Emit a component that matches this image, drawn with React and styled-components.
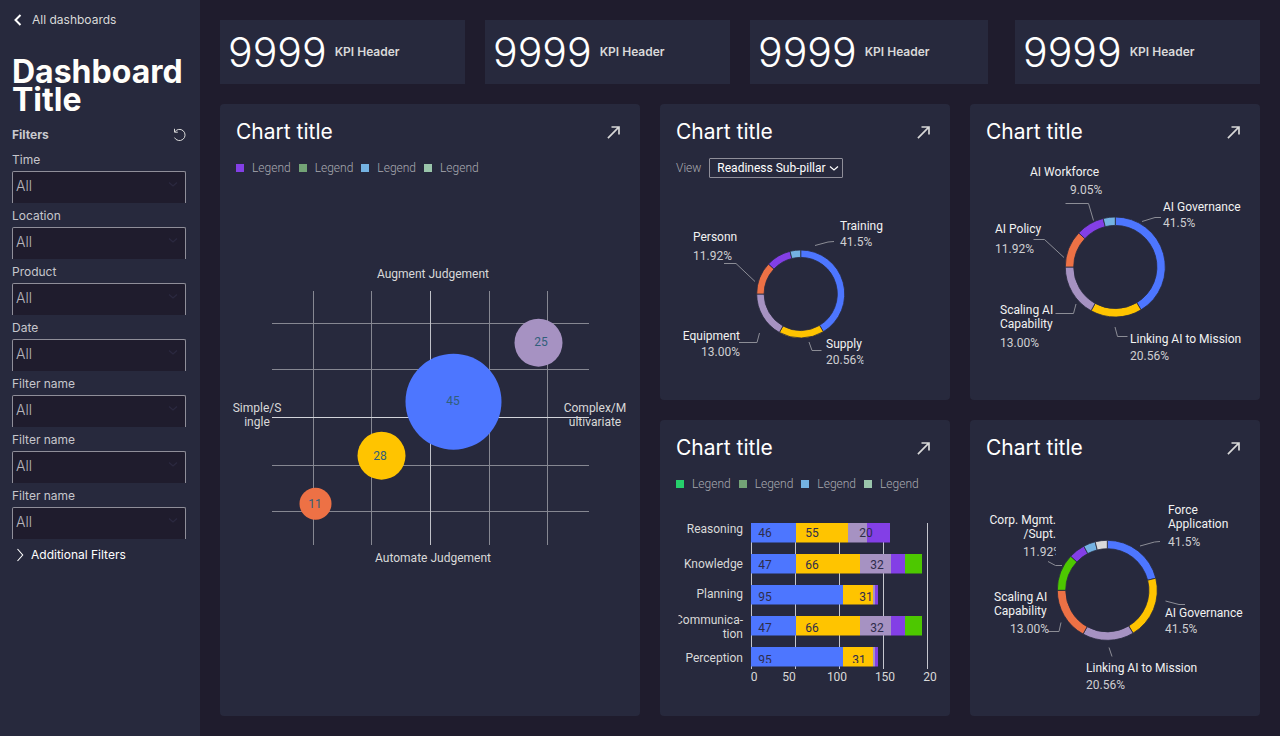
import React from "react";
import styled, { createGlobalStyle } from "styled-components";

const color = {
  page: "#1f1c2d",
  panel: "#27293d",
  white: "#ffffff",
  soft: "#d9d9d9",
  muted: "#a9a9b1",
  border: "#8f8e99",
  grid: "#868792",
  blue: "#4d76ff",
  yellow: "#ffc400",
  lilac: "#a692c2",
  orange: "#ed7145",
  purple: "#833fe6",
  sky: "#74b2e2",
  green: "#4dc800",
  ink: "#2f2d4b",
};

const GlobalStyle = createGlobalStyle`
  *, *::before, *::after { box-sizing: border-box; }
  body {
    margin: 0;
    background: ${color.page};
    color: ${color.white};
    font-family: Inter, "Liberation Sans", sans-serif;
    font-size: 12px;
    line-height: 16px;
  }
`;

const Page = styled.div`
  display: flex;
  min-height: 100vh;
`;

const Sidebar = styled.aside`
  display: flex;
  flex-direction: column;
  flex: 0 0 200px;
  padding: 12px 14px 12px 12px;
  background: ${color.panel};
`;

const BackLink = styled.a`
  display: flex;
  align-items: center;
  gap: 8px;
  color: ${color.soft};
  text-decoration: none;
`;

const PageTitle = styled.h1`
  margin: 30px 0 13px;
  font-size: 32px;
  line-height: 28px;
  font-weight: 700;
  color: #fffefa;
`;

const FiltersHeader = styled.div`
  display: flex;
  align-items: center;
  justify-content: space-between;
  margin-bottom: 9px;
`;

const FiltersHeading = styled.h2`
  margin: 0;
  font-size: 12px;
  line-height: 16px;
  font-weight: 700;
  color: #c9cacf;
`;

const IconButton = styled.button`
  display: flex;
  padding: 0;
  border: 0;
  background: none;
  color: ${color.soft};
  cursor: pointer;
`;

const FilterList = styled.div`
  display: flex;
  flex-direction: column;
  gap: 5px;
`;

const Field = styled.div`
  display: flex;
  flex-direction: column;
  gap: 3px;
`;

const FieldLabel = styled.label`
  color: #c6c6cc;
`;

const SelectFrame = styled.div`
  display: grid;
  align-items: center;

  > * {
    grid-area: 1 / 1;
  }

  > svg {
    justify-self: end;
    margin-right: ${(p) => (p.$compact ? 3 : 7)}px;
    margin-bottom: ${(p) => (p.$compact ? 0 : 6)}px;
    pointer-events: none;
  }
`;

const Select = styled.select`
  appearance: none;
  width: 100%;
  height: 32px;
  padding: 0 20px 4px 3px;
  border: 1px solid ${color.border};
  border-bottom: 0;
  border-radius: 2px 2px 0 0;
  background: ${color.page};
  color: #b5b5bc;
  font: 300 14px Inter, "Liberation Sans", sans-serif;
`;

const CompactSelect = styled.select`
  appearance: none;
  height: 20px;
  padding: 0 16px 1px 7px;
  border: 1px solid ${color.border};
  border-radius: 1px;
  background: ${color.panel};
  color: ${color.white};
  font: 400 12px Roboto, "Liberation Sans", sans-serif;
`;

const MoreButton = styled.button`
  display: flex;
  align-items: center;
  gap: 3px;
  margin-top: 8px;
  padding: 0;
  border: 0;
  background: none;
  color: ${color.white};
  font: inherit;
  cursor: pointer;
`;

const Main = styled.main`
  display: flex;
  flex-direction: column;
  flex: 1;
  gap: 20px;
  min-width: 0;
  padding: 20px;
`;

const KpiRow = styled.section`
  display: grid;
  grid-template-columns: repeat(4, 1fr);
  gap: 20px;
`;

const Kpi = styled.div`
  display: flex;
  align-items: center;
  gap: 8px;
  width: ${(p) => p.$width || "100%"};
  height: 64px;
  padding: 0 8px;
  background: ${color.panel};
`;

const KpiValue = styled.span`
  font-size: 41px;
  line-height: 48px;
  font-weight: 300;
`;

const KpiLabel = styled.span`
  font-weight: 600;
  color: ${color.soft};
`;

const Cards = styled.section`
  display: grid;
  flex: 1;
  grid-template-columns: 42fr 29fr 29fr;
  grid-template-rows: 1fr 1fr;
  gap: 20px;
`;

const CardFrame = styled.article`
  display: flex;
  flex-direction: column;
  grid-row: ${(p) => (p.$tall ? "span 2" : "auto")};
  min-width: 0;
  padding: 16px;
  border-radius: 4px;
  background: ${color.panel};
`;

const CardHeader = styled.header`
  display: flex;
  align-items: center;
  justify-content: space-between;
`;

const CardTitle = styled.h2`
  margin: 0;
  font-size: 21px;
  line-height: 24px;
  font-weight: 400;
`;

const Toolbar = styled.div`
  display: flex;
  align-items: center;
  gap: 8px;
  height: 20px;
  margin-top: 14px;
  color: ${color.muted};
  font-family: Roboto, "Liberation Sans", sans-serif;
  font-weight: 300;
`;

const LegendItem = styled.span`
  display: flex;
  align-items: center;
  gap: 8px;
`;

const Swatch = styled.span`
  width: 8px;
  height: 8px;
  background: ${(p) => p.$color};
`;

const Chart = styled.svg`
  display: block;
  width: 100%;
  height: auto;
  overflow: visible;
  font: 400 12px Roboto, "Liberation Sans", sans-serif;
`;

const ChartText = styled.text`
  fill: ${(p) => p.$fill || color.soft};
  text-anchor: ${(p) => p.$anchor || "start"};
`;

const Leader = styled.polyline`
  fill: none;
  stroke: #8c8d96;
`;

const Stroke = styled.svg`
  display: block;
  fill: none;
  stroke: currentColor;
`;

function ChevronDown({ tint, size = 12 }) {
  return (
    <Stroke width={size} height={size} viewBox="0 0 12 12" color={tint} aria-hidden="true">
      <path d="M2 4.5 6 8 10 4.5" strokeWidth="1.2" />
    </Stroke>
  );
}

function ResetIcon() {
  return (
    <Stroke width="14" height="14" viewBox="0 0 14 14" aria-hidden="true">
      <path d="M2.5 .8V4.2H5.8" strokeWidth="1" />
      <path d="M2.7 4A5.6 5.6 0 1 1 2.5 9.6" strokeWidth="1" />
    </Stroke>
  );
}

function ExpandIcon() {
  return (
    <svg width="20" height="20" viewBox="0 0 24 24" fill="currentColor" aria-hidden="true">
      <path d="M9 5v2h6.59L4 18.59 5.41 20 17 8.41V15h2V5H9z" />
    </svg>
  );
}

function Card({ tall, toolbar, children }) {
  return (
    <CardFrame $tall={tall}>
      <CardHeader>
        <CardTitle>Chart title</CardTitle>
        <IconButton type="button" aria-label="Expand chart">
          <ExpandIcon />
        </IconButton>
      </CardHeader>
      {toolbar}
      {children}
    </CardFrame>
  );
}

function Legend({ colors }) {
  return (
    <Toolbar>
      {colors.map((c) => (
        <LegendItem key={c}>
          <Swatch $color={c} />
          Legend
        </LegendItem>
      ))}
    </Toolbar>
  );
}

const bubbles = [
  { x: 233.5, y: 297.7, r: 48, value: 45, tx: 233, ty: 301, fill: color.blue },
  { x: 318.5, y: 238.7, r: 24, value: 25, tx: 321, ty: 242, fill: color.lilac },
  { x: 161.5, y: 351.7, r: 24, value: 28, tx: 160, ty: 356, fill: color.yellow },
  { x: 95.5, y: 399.7, r: 16, value: 11, tx: 95, ty: 404, fill: color.orange },
];

function BubbleChart() {
  return (
    <Chart viewBox="16 74 388 522" role="img" aria-label="Judgement by complexity">
      {[93.5, 151.5, 269.5, 327.5].map((x) => (
        <path key={x} d={`M${x} 187V441`} stroke={color.grid} />
      ))}
      {[219.5, 265.5, 361.5, 407.5].map((y) => (
        <path key={y} d={`M52 ${y}H369`} stroke={color.grid} />
      ))}
      <path d="M210.5 187V441" stroke="#c0c1c8" />
      <path d="M52 313.5H369" stroke="#d2d3da" />
      {bubbles.map((b) => (
        <g key={b.value}>
          <circle cx={b.x} cy={b.y} r={b.r} fill={b.fill} />
          <ChartText x={b.tx} y={b.ty} $anchor="middle" $fill="#315f7a">{b.value}</ChartText>
        </g>
      ))}
      <ChartText x="213" y="174" $anchor="middle">Augment Judgement</ChartText>
      <ChartText x="213" y="458" $anchor="middle">Automate Judgement</ChartText>
      <ChartText x="37" y="308" $anchor="middle">Simple/S</ChartText>
      <ChartText x="37" y="322" $anchor="middle">ingle</ChartText>
      <ChartText x="375" y="308" $anchor="middle">Complex/M</ChartText>
      <ChartText x="375" y="322" $anchor="middle">ultivariate</ChartText>
    </Chart>
  );
}

function ringSlice(cx, cy, outer, inner, from, to) {
  const at = (r, deg) => {
    const a = ((deg - 90) * Math.PI) / 180;
    return `${(cx + r * Math.cos(a)).toFixed(2)} ${(cy + r * Math.sin(a)).toFixed(2)}`;
  };
  return `M${at(outer, from)}A${outer} ${outer} 0 0 1 ${at(outer, to)}L${at(inner, to)}A${inner} ${inner} 0 0 0 ${at(inner, from)}Z`;
}

function Donut({ top, cx, cy, outer, inner, slices, leaders, labels, name, clip }) {
  return (
    <Chart viewBox={`16 ${top} 258 ${280 - top}`} role="img" aria-label={name}>
      {clip && (
        <clipPath id={clip.id}>
          <rect x="0" y="0" width={clip.right} height="296" />
        </clipPath>
      )}
      {slices.map(([fill, from, to]) => (
        <path
          key={fill}
          d={ringSlice(cx, cy, outer, inner, from, to)}
          fill={fill}
          stroke={color.panel}
          strokeWidth="0.8"
        />
      ))}
      {leaders.map((points) => (
        <Leader key={points} points={points} />
      ))}
      {labels.map(([text, x, y, opt = {}]) => (
        <ChartText
          key={text + y}
          x={x}
          y={y}
          $anchor={opt.end ? "end" : "start"}
          $fill={text.endsWith("%") ? "#cfcfd2" : "#f2f2f2"}
          clipPath={opt.clipped ? `url(#${clip.id})` : undefined}
        >
          {text}
        </ChartText>
      ))}
    </Chart>
  );
}

const sixSlices = [
  [color.blue, 0, 149],
  [color.yellow, 149, 209],
  [color.lilac, 209, 270],
  [color.orange, 270, 313],
  [color.purple, 313, 346],
  [color.sky, 346, 360],
];

const readiness = {
  name: "Readiness by sub-pillar",
  top: 74, cx: 140.7, cy: 190, outer: 44, inner: 36.6,
  slices: sixSlices,
  clip: { id: "readiness-clip", right: 203.5 },
  leaders: [
    "155,141.5 168,138 174,137.5",
    "64,159.5 76,159.5 95,177.5",
    "79,238.5 97,238.5 99.5,229",
    "149,238 152,246.5 161.5,246.5",
  ],
  labels: [
    ["Training", 180, 126],
    ["41.5%", 180, 142],
    ["Personn", 33, 137],
    ["11.92%", 33, 156],
    ["Equipment", 80, 236, { end: true }],
    ["13.00%", 80, 252, { end: true }],
    ["Supply", 166, 244],
    ["20.56%", 166, 260, { clipped: true }],
  ],
};

const pillars = {
  name: "AI pillars",
  top: 40, cx: 145.3, cy: 163, outer: 50, inner: 41.6,
  slices: sixSlices,
  leaders: [
    "95.5,99.5 118.5,99.5 123.5,116.5",
    "172,117.5 185,113.5 191,113.5",
    "63.5,135.5 74.5,135.5 94,153.5",
    "85.5,209.5 103.5,209.5 106,200",
    "145,223 147.5,232.5 157.5,232.5",
  ],
  labels: [
    ["AI Workforce", 60, 72],
    ["9.05%", 100, 90],
    ["AI Governance", 193, 107],
    ["41.5%", 193, 123],
    ["AI Policy", 25, 129],
    ["11.92%", 25, 149],
    ["Scaling AI", 30, 210],
    ["Capability", 30, 224],
    ["13.00%", 30, 243],
    ["Linking AI to Mission", 160, 239],
    ["20.56%", 160, 256],
  ],
};

const functions = {
  name: "AI functions",
  top: 40, cx: 137.3, cy: 170.3, outer: 50, inner: 41.6,
  slices: [
    [color.blue, 0, 76],
    [color.yellow, 76, 149],
    [color.lilac, 149, 209],
    [color.orange, 209, 270],
    [color.green, 270, 313],
    [color.purple, 313, 332],
    [color.sky, 332, 346],
    ["#d9d9d9", 346, 360],
  ],
  clip: { id: "functions-clip", right: 85.8 },
  leaders: [
    "170,126 184.5,122 190,121.5",
    "78,141.5 85.5,145.5 92,145.5",
    "78,211.5 89,211.5 91,202.5",
    "195.5,181 209,184.5 215,184.5",
    "139,227.5 142,236.5",
  ],
  labels: [
    ["Force", 198, 94],
    ["Application", 198, 108],
    ["41.5%", 198, 126],
    ["Corp. Mgmt.", 86, 104, { end: true }],
    ["/Supt.", 86, 118, { end: true }],
    ["11.92%", 53, 136, { clipped: true }],
    ["Scaling AI", 24, 181],
    ["Capability", 24, 195],
    ["13.00%", 40, 213],
    ["AI Governance", 195, 197],
    ["41.5%", 195, 213],
    ["Linking AI to Mission", 116, 252],
    ["20.56%", 116, 269],
  ],
};

const wide = [[color.blue, 91, 136], [color.yellow, 136, 200], [color.lilac, 200, 231], [color.purple, 231, 245], [color.green, 245, 262]];
const narrow = [[color.blue, 91, 183], [color.yellow, 183, 213], [color.lilac, 213, 215], [color.purple, 215, 218]];

const bars = [
  {
    y: 103, base: 117, label: [["Reasoning", 113]],
    parts: [[color.blue, 91, 136], [color.yellow, 136, 188], [color.lilac, 188, 207], [color.purple, 207, 230]],
    values: [[46, 105], [55, 152], [20, 206]],
  },
  { y: 134, base: 149, label: [["Knowledge", 148]], parts: wide, values: [[47, 105], [66, 152], [32, 217]] },
  { y: 165, base: 181, label: [["Planning", 178]], parts: narrow, values: [[95, 105], [31, 206]] },
  { y: 196, base: 212, label: [["Communica-", 204], ["tion", 218]], parts: wide, values: [[47, 105], [66, 152], [32, 217]] },
  { y: 227, base: 244, label: [["Perception", 242]], parts: narrow, values: [[95, 105], [31, 199]] },
];

function BarChart() {
  return (
    <Chart viewBox="16 74 258 206" role="img" aria-label="Skills breakdown">
      <clipPath id="bars-clip">
        <rect x="18.5" y="90" width="250" height="153" />
      </clipPath>
      {[91.5, 135.5, 179.5, 223.5, 267.5].map((x) => (
        <path key={x} d={`M${x} 103V249`} stroke="#c5c6ce" />
      ))}
      {bars.map((b) => (
        <g key={b.y}>
          {b.parts.map(([fill, from, to]) => (
            <rect key={fill} x={from} y={b.y} width={to - from} height="19.5" fill={fill} />
          ))}
          <g clipPath="url(#bars-clip)">
            {b.values.map(([v, x]) => (
              <ChartText key={v} x={x} y={b.base} $anchor="middle" $fill={color.ink}>{v}</ChartText>
            ))}
          </g>
          <g clipPath={b.label.length > 1 ? "url(#bars-clip)" : undefined}>
            {b.label.map(([text, y]) => (
              <ChartText key={text} x="83" y={y} $anchor="end">{text}</ChartText>
            ))}
          </g>
        </g>
      ))}
      {[["0", 94], ["50", 129], ["100", 177], ["150", 225], ["20", 270]].map(([t, x]) => (
        <ChartText key={t} x={x} y="261" $anchor="middle">{t}</ChartText>
      ))}
    </Chart>
  );
}

const filters = ["Time", "Location", "Product", "Date", "Filter name", "Filter name", "Filter name"];
const kpiWidths = ["100%", "100%", "97%", "100%"];

export default function App() {
  return (
    <Page>
      <GlobalStyle />
      <Sidebar>
        <BackLink href="#dashboards">
          <Stroke width="12" height="16" viewBox="0 0 12 16" color={color.white} aria-hidden="true">
            <path d="M8.5 3 3.5 8 8.5 13" strokeWidth="2" />
          </Stroke>
          All dashboards
        </BackLink>
        <PageTitle>Dashboard Title</PageTitle>
        <FiltersHeader>
          <FiltersHeading>Filters</FiltersHeading>
          <IconButton type="button" aria-label="Reset filters">
            <ResetIcon />
          </IconButton>
        </FiltersHeader>
        <FilterList>
          {filters.map((name, i) => (
            <Field key={i}>
              <FieldLabel htmlFor={`filter-${i}`}>{name}</FieldLabel>
              <SelectFrame>
                <Select id={`filter-${i}`}>
                  <option>All</option>
                </Select>
                <ChevronDown tint="#2b2940" />
              </SelectFrame>
            </Field>
          ))}
        </FilterList>
        <MoreButton type="button">
          <Stroke width="16" height="16" viewBox="0 0 16 16" aria-hidden="true">
            <path d="M5.5 2 10.7 8 5.5 14" strokeWidth="1.1" />
          </Stroke>
          Additional Filters
        </MoreButton>
      </Sidebar>
      <Main>
        <KpiRow>
          {kpiWidths.map((width, i) => (
            <Kpi key={i} $width={width}>
              <KpiValue>9999</KpiValue>
              <KpiLabel>KPI Header</KpiLabel>
            </Kpi>
          ))}
        </KpiRow>
        <Cards>
          <Card tall toolbar={<Legend colors={[color.purple, "#73a376", color.sky, "#9ac5ab"]} />}>
            <BubbleChart />
          </Card>
          <Card
            toolbar={
              <Toolbar>
                <label htmlFor="view">View</label>
                <SelectFrame $compact>
                  <CompactSelect id="view">
                    <option>Readiness Sub-pillar</option>
                  </CompactSelect>
                  <ChevronDown tint={color.white} />
                </SelectFrame>
              </Toolbar>
            }
          >
            <Donut {...readiness} />
          </Card>
          <Card>
            <Donut {...pillars} />
          </Card>
          <Card toolbar={<Legend colors={["#26cf6b", "#73a376", color.sky, "#9ac5ab"]} />}>
            <BarChart />
          </Card>
          <Card>
            <Donut {...functions} />
          </Card>
        </Cards>
      </Main>
    </Page>
  );
}
